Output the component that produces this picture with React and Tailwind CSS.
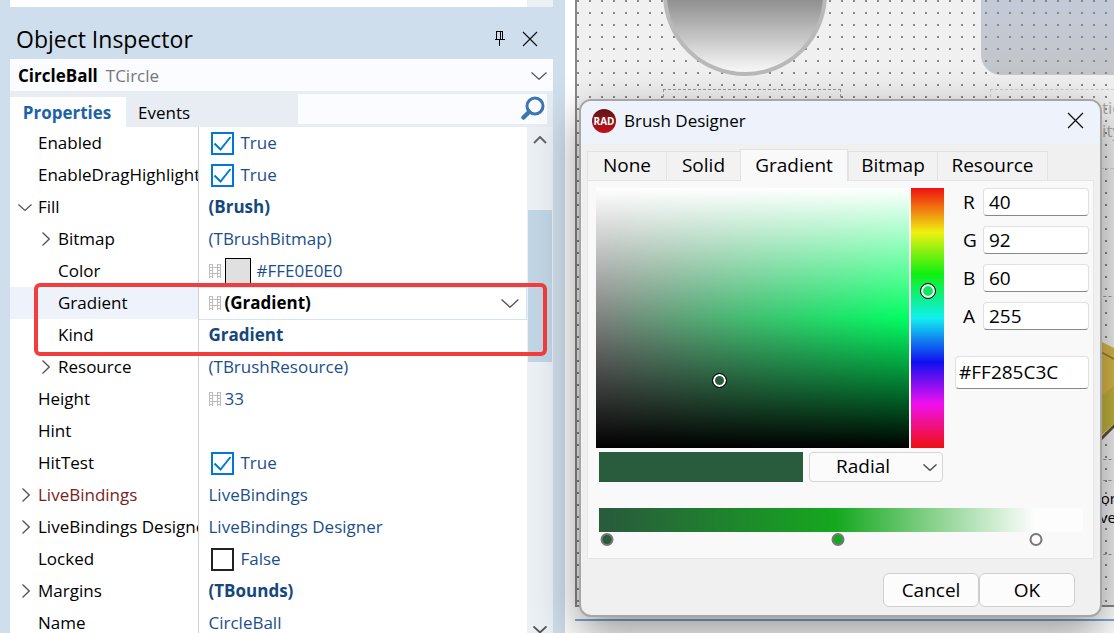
import { useState } from 'react';

const properties = [
  { name: 'Enabled', kind: 'bool', checked: true },
  { name: 'EnableDragHighlight', kind: 'bool', checked: true },
  { name: 'Fill', value: '(Brush)', bold: true, expand: 'open' },
  { name: 'Bitmap', value: '(TBrushBitmap)', nested: true, expand: 'closed' },
  { name: 'Color', value: '#FFE0E0E0', nested: true, kind: 'color' },
  { name: 'Gradient', value: '(Gradient)', nested: true, kind: 'selected' },
  { name: 'Kind', value: 'Gradient', nested: true, bold: true },
  { name: 'Resource', value: '(TBrushResource)', nested: true, expand: 'closed' },
  { name: 'Height', value: '33', film: true },
  { name: 'Hint', value: '' },
  { name: 'HitTest', kind: 'bool', checked: true },
  { name: 'LiveBindings', value: 'LiveBindings', expand: 'closed', accent: true },
  { name: 'LiveBindings Designer', value: 'LiveBindings Designer', expand: 'closed' },
  { name: 'Locked', kind: 'bool', checked: false },
  { name: 'Margins', value: '(TBounds)', bold: true, expand: 'closed' },
  { name: 'Name', value: 'CircleBall' },
];

const channels = [
  { label: 'R', value: 40 },
  { label: 'G', value: 92 },
  { label: 'B', value: 60 },
  { label: 'A', value: 255 },
];

const stops = [
  { color: '#285c3c', at: 1.7 },
  { color: '#16a81f', at: 49.3 },
  { color: '#ffffff', at: 90.2 },
];

const FilmIcon = () => (
  <svg width="12" height="14" viewBox="0 0 12 14" fill="none" stroke="#bdbdbd" className="shrink-0" shapeRendering="crispEdges">
    <path d="M0.5 0V14M3.5 0V14M8.5 0V14M11.5 0V14M4 3.5H8M4 9.5H8" />
    <path d="M1 0.5H3M1 3.5H3M1 6.5H3M1 9.5H3M1 12.5H3M9 0.5H11M9 3.5H11M9 6.5H11M9 9.5H11M9 12.5H11" />
  </svg>
);

const CloseIcon = ({ size }) => (
  <svg width={size} height={size} viewBox="0 0 16 16" fill="none" stroke="#111" strokeWidth="1.2">
    <path d="M1 1L15 15M15 1L1 15" />
  </svg>
);

const PinIcon = () => (
  <svg width="12" height="16" viewBox="0 0 12 16" fill="none" stroke="#000" shapeRendering="crispEdges">
    <path d="M2.5 8V0.5H8.5V8M6.5 1V8M0.5 8.5H10.5M5 9V15" />
  </svg>
);

const SearchIcon = () => (
  <svg width="26" height="26" viewBox="0 0 26 26" fill="none" stroke="#3b76b3">
    <circle cx="14" cy="10" r="8" strokeWidth="3" />
    <path d="M8 16L2.5 21.5" strokeWidth="4.5" strokeLinecap="round" />
  </svg>
);

const DownIcon = ({ width = 16, strokeWidth = 1.4 }) => (
  <svg width={width} height={width / 2} viewBox="0 0 16 8" fill="none" stroke="#555" strokeWidth={strokeWidth} className="shrink-0">
    <path d="M0.5 0.5L8 7.3L15.5 0.5" />
  </svg>
);

const UpIcon = () => (
  <svg width="14" height="8" viewBox="0 0 14 8" fill="none" stroke="#666" strokeWidth="2" className="shrink-0">
    <path d="M1 7L7 1L13 7" />
  </svg>
);

const RightIcon = () => (
  <svg width="8" height="14" viewBox="0 0 8 14" fill="none" stroke="#555" strokeWidth="1.3" className="ml-1">
    <path d="M0.5 0.5L7.2 7L0.5 13.5" />
  </svg>
);

const BoolValue = ({ name, initial }) => {
  const [checked, setChecked] = useState(initial);

  return (
    <label className="flex items-center gap-[7px] pl-0.5">
      <span className="relative flex">
        <input
          type="checkbox"
          aria-label={name}
          checked={checked}
          onChange={(e) => setChecked(e.target.checked)}
          className="size-[23px] appearance-none border-2 border-[#222] bg-white checked:border-[#0078d7]"
        />
        {checked && (
          <svg viewBox="0 0 23 23" fill="none" stroke="#0078d7" strokeWidth="2" className="pointer-events-none absolute inset-0">
            <path d="M3.5 11.5L9.5 17.5L19.5 5" />
          </svg>
        )}
      </span>
      {checked ? 'True' : 'False'}
    </label>
  );
};

const PropertyValue = ({ item }) => {
  if (item.kind === 'bool') return <BoolValue name={item.name} initial={item.checked} />;
  if (item.kind === 'color') {
    return (
      <div className="flex items-center">
        <FilmIcon />
        <span className="ml-1 mr-1.5 size-[26px] border border-black bg-[#e0e0e0]" />
        {item.value}
      </div>
    );
  }
  if (item.kind === 'selected') {
    return (
      <div className="flex items-center gap-1 pr-[7px] font-bold text-black">
        <FilmIcon />
        <span className="flex-1">{item.value}</span>
        <button aria-label="Open gradient editor">
          <DownIcon width={18} strokeWidth={1.2} />
        </button>
      </div>
    );
  }
  return (
    <div className={item.bold ? 'flex items-center font-bold text-[#14477e]' : 'flex items-center gap-1'}>
      {item.film && <FilmIcon />}
      {item.value}
    </div>
  );
};

const PropertyRow = ({ item }) => {
  const selected = item.kind === 'selected';

  return (
    <tr className="h-8">
      <th
        scope="row"
        className={`overflow-hidden border-r border-[#d0d0d0] p-0 text-left font-normal ${selected ? 'bg-[#eef2fa]' : ''} ${item.accent ? 'text-[#7d1c1c]' : 'text-black'}`}
      >
        <div className={`flex items-center gap-1 ${item.nested ? 'pl-7' : 'pl-2'}`}>
          <span className="w-4 shrink-0">
            {item.expand === 'open' && <DownIcon width={14} />}
            {item.expand === 'closed' && <RightIcon />}
          </span>
          {item.name}
        </div>
      </th>
      <td className={`p-0 pl-2.5 text-[#1b4f8a] ${selected ? 'border border-l-0 border-[#cbe4f8]' : ''}`}>
        <PropertyValue item={item} />
      </td>
    </tr>
  );
};

const ObjectInspector = () => (
  <aside className="flex w-[565px] shrink-0 flex-col bg-[#cfdeec] pl-2.5 pr-3">
    <div className="flex h-[7px] shrink-0 justify-end bg-white">
      <div className="w-[26px] bg-[#ebf0f4]" />
    </div>

    <header className="flex h-[52px] shrink-0 items-center gap-4 pl-1.5 pr-[15px] pt-3">
      <h1 className="flex-1 text-[23px]">Object Inspector</h1>
      <button aria-label="Pin">
        <PinIcon />
      </button>
      <button aria-label="Close inspector">
        <CloseIcon size={16} />
      </button>
    </header>

    <button className="flex h-8 shrink-0 items-center gap-2 bg-[#fafcff] pl-2 pr-1.5 pt-0.5 text-left">
      <b>CircleBall</b>
      <span className="flex-1 text-[#777]">TCircle</span>
      <DownIcon strokeWidth={1.2} />
    </button>

    <div className="flex h-9 shrink-0 items-end bg-[#e7edf3]">
      <button className="h-[30px] w-[116px] bg-white pr-0.5 pt-0.5 font-bold text-[#1c63a5]">Properties</button>
      <button className="h-[30px] px-3 pt-0.5">Events</button>
      <label className="mb-[3px] ml-auto mr-1.5 flex h-[30px] w-[249px] items-center bg-[#fafcff]">
        <input type="search" aria-label="Filter properties" className="min-w-0 flex-1 bg-transparent px-2 outline-none" />
        <SearchIcon />
      </label>
    </div>

    <div className="relative flex min-h-0 flex-1 bg-white">
      <div className="min-w-0 flex-1 overflow-hidden">
        <table className="w-full table-fixed border-collapse whitespace-nowrap">
          <colgroup>
            <col className="w-[188px]" />
            <col />
          </colgroup>
          <tbody>
            {properties.map((item) => (
              <PropertyRow key={item.name} item={item} />
            ))}
          </tbody>
        </table>
      </div>

      <div className="flex w-[26px] flex-col items-center overflow-hidden bg-[#ebf0f4]">
        <div className="flex h-[83px] shrink-0 pt-[9px]">
          <UpIcon />
        </div>
        <div className="h-[152px] w-6 shrink-0 bg-[#c2d5e5]" />
        <div className="mt-auto">
          <DownIcon width={14} strokeWidth={2.2} />
        </div>
      </div>

      {/* callout around the two gradient properties */}
      <div className="pointer-events-none absolute left-6 right-1.5 top-[156px] h-[73px] rounded-md border-4 border-[#f23d3d]" />
    </div>
  </aside>
);

const FormCanvas = () => (
  <div className="relative ml-2.5 h-[607px] overflow-hidden border-b-2 border-l-2 border-[#888] bg-[#f0f0f0]">
    <div className="absolute -right-5 -top-5 left-[404px] h-[95px] rounded-[20px] border border-[#c5c9d2] bg-linear-to-b from-[#c5cbdd] to-[#c2c5c8]" />
    <div className="absolute inset-0 bg-[radial-gradient(circle_at_1px_1px,#888_1px,transparent_1px)] bg-[size:12px_12px]" />
    <div className="absolute -top-[88px] left-[86px] size-[164px] rounded-full border-4 border-[#b9b9b9] bg-linear-to-b from-[#222] to-white bg-origin-border" />
    <div className="absolute left-[86px] top-[89px] h-10 w-[178px] border border-dashed border-[#999]" />
    <div className="absolute -right-10 left-[413px] top-[89px] h-20 border border-dashed border-[#ccc]" />
    <p className="absolute left-[421px] top-[96px] w-[135px] whitespace-nowrap text-right text-[17px] leading-[23px] text-[#aaa]">
      <span className="block">Float Animation</span>
      <span className="block pr-3">Opacity</span>
    </p>
    <div className="absolute -right-2 left-[500px] top-[296px] border-t border-dashed border-[#999]" />
    <svg width="40" height="110" viewBox="0 0 40 110" className="absolute left-[513px] top-[336px]">
      <path d="M0 0L40 20V72L0 110Z" fill="#d9b84a" />
      <path d="M0 10L40 32" stroke="#8f7a35" strokeWidth="1.5" />
      <path d="M8 62L40 38V72L0 110Z" fill="#c2b23d" />
      <path d="M8 106L40 74" stroke="#5a5430" strokeWidth="3" />
    </svg>
    <div className="absolute -right-2 left-[500px] top-[459px] border-t border-dashed border-[#999]" />
    <div className="absolute -right-2 left-[500px] top-[480px] h-[75px] border-y border-dashed border-[#999]" />
    <p className="absolute left-[453px] top-[489px] w-[86px] text-right text-[15px] leading-[19px]">
      Color
      <br />
      Curve
    </p>
  </div>
);

const designerTabs = [
  { name: 'None', width: 'w-20' },
  { name: 'Solid', width: 'w-[75px]' },
  { name: 'Gradient', width: 'w-[108px]' },
  { name: 'Bitmap', width: 'w-[90px]' },
  { name: 'Resource', width: 'w-[111px]' },
];

const BrushDesigner = () => {
  const [tab, setTab] = useState('Gradient');

  return (
    <section
      role="dialog"
      aria-labelledby="designer-title"
      className="absolute left-3.5 top-[99px] w-[523px] overflow-hidden rounded-xl border-2 border-[#a6a6a6] bg-[#f0f0f0] shadow-[0_16px_44px_rgba(0,0,0,0.42)]"
    >
      <header className="flex h-[43px] items-center bg-[#edf2fb] pb-1 pl-[11px] pr-4">
        <span className="flex size-6 items-center justify-center rounded-full bg-linear-to-b from-[#5e1218] to-[#c80d16] text-[10px] font-bold text-white">
          RAD
        </span>
        <h2 id="designer-title" className="ml-2 flex-1">Brush Designer</h2>
        <button aria-label="Close">
          <CloseIcon size={17} />
        </button>
      </header>

      <div className="px-1.5 pt-[5px] text-[19px]">
        <div role="tablist" className="flex h-8 items-end">
          {designerTabs.map((t) => (
            <button
              key={t.name}
              role="tab"
              aria-selected={tab === t.name}
              onClick={() => setTab(t.name)}
              className={`flex justify-center border border-b-0 border-[#e2e2e2] leading-6 ${t.width} ${
                tab === t.name
                  ? 'relative h-8 bg-[#f9f9f9] pt-[3px]'
                  : '-mr-px mb-px h-[29px] bg-[#f2f2f2] pt-px'
              }`}
            >
              {t.name}
            </button>
          ))}
        </div>

        <div className="-mt-px border border-[#e5e5e5] bg-[#f9f9f9] pb-3 pl-2 pr-1 pt-[7px]">
          <div className="flex">
            <div className="relative h-[260px] w-[313px] bg-[linear-gradient(to_bottom,#fff,rgba(255,255,255,0)_50%,rgba(0,0,0,0)_50%,#000),linear-gradient(to_right,#808080,#00ff62)]">
              <button
                aria-label="Saturation and lightness"
                className="absolute left-[116px] top-[185px] size-[15px] rounded-full border border-black bg-[#285c3c] ring-2 ring-inset ring-white"
              />
            </div>
            <input
              type="range"
              aria-label="Hue"
              min="0"
              max="360"
              defaultValue="140"
              className="ml-0.5 h-[260px] w-[33px] appearance-none bg-[linear-gradient(to_bottom,#f01010,#f0f010_17%,#10f010_33%,#10f0f0_50%,#1010f0_67%,#f010f0_83%,#f01010)] [writing-mode:vertical-lr] [&::-webkit-slider-thumb]:size-4 [&::-webkit-slider-thumb]:appearance-none [&::-webkit-slider-thumb]:rounded-full [&::-webkit-slider-thumb]:border [&::-webkit-slider-thumb]:border-black [&::-webkit-slider-thumb]:bg-[#10e860] [&::-webkit-slider-thumb]:shadow-[inset_0_0_0_2px_#fff]"
            />
            <div className="ml-auto flex w-[134px] flex-col gap-2.5">
              {channels.map((c) => (
                <label key={c.label} className="flex h-7 items-center">
                  <span className="w-7 pl-2">{c.label}</span>
                  <input
                    type="text"
                    defaultValue={c.value}
                    className="h-7 min-w-0 flex-1 rounded border border-[#e0e0e0] border-b-[#888] bg-white px-[5px] outline-none"
                  />
                </label>
              ))}
              <input
                type="text"
                aria-label="Hex colour"
                defaultValue="#FF285C3C"
                className="mt-4 h-[33px] w-full rounded border border-[#e0e0e0] border-b-[#888] bg-white px-[3px] pb-0.5 outline-none"
              />
            </div>
          </div>

          <div className="mt-1 flex gap-1.5 pl-[3px]">
            <div className="h-[30px] w-[204px] bg-[#285c3c]" />
            <div className="relative w-[134px]">
              <select
                aria-label="Gradient style"
                defaultValue="Radial"
                className="h-[30px] w-full appearance-none rounded-sm border border-[#d6d6d6] bg-[#fbfbfb] pb-0.5 pl-[26px]"
              >
                <option>Linear</option>
                <option>Radial</option>
              </select>
              <span className="pointer-events-none absolute right-1.5 top-3">
                <DownIcon width={14} strokeWidth={1.7} />
              </span>
            </div>
          </div>

          <div className="ml-[3px] mr-1.5 mt-[26px]">
            <div className="h-6 bg-[linear-gradient(to_right,#285c3c_2%,#16a81f_49%,#fdfdfd_90%)]" />
            <div className="relative h-3.5">
              {stops.map((s) => (
                <button
                  key={s.color}
                  aria-label={`Stop ${s.color}`}
                  className="absolute top-px size-[13px] -translate-x-1/2 rounded-full border-2 border-[#777]"
                  style={{ left: `${s.at}%`, backgroundColor: s.color }}
                />
              ))}
            </div>
          </div>
        </div>

        <footer className="flex justify-end pb-2 pr-[19px] pt-3.5">
          <button className="h-[34px] w-24 rounded-md border border-[#cfcfcf] bg-[#fcfcfc]">Cancel</button>
          <button className="h-[34px] w-24 rounded-md border border-[#cfcfcf] bg-[#fcfcfc]">OK</button>
        </footer>
      </div>
    </section>
  );
};

const App = () => (
  <div className="flex h-screen overflow-hidden bg-white font-['Open_Sans',sans-serif] text-[17px] leading-6 text-black">
    <ObjectInspector />
    <main className="relative min-w-0 flex-1">
      <FormCanvas />
      <div className="ml-2.5 mt-3 h-0.5 bg-[#7fa8d4]" />
      <BrushDesigner />
    </main>
  </div>
);

export default App;
